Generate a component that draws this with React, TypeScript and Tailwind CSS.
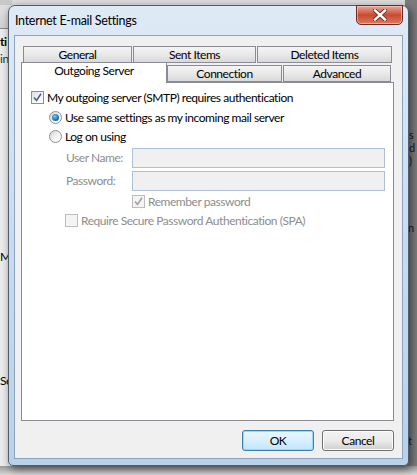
const font = { fontFamily: "Lato, 'Liberation Sans', sans-serif" };

function Check({ checked, disabled }: { checked?: boolean; disabled?: boolean }) {
  return (
    <div
      className={
        "w-[13px] h-[13px] shrink-0 border flex items-center justify-center " +
        (disabled
          ? "border-[#bcbcbc] bg-[#f4f4f4]"
          : "border-[#8e8f8f] bg-gradient-to-br from-[#dcdcdc] via-[#f4f4f4] to-white")
      }
    >
      {checked && (
        <svg width="9" height="9" viewBox="0 0 9 9">
          <path
            d="M1 4.5 L3.5 7.5 L8 0.8"
            fill="none"
            stroke={disabled ? "#a2a2a2" : "#4a5f97"}
            strokeWidth="1.6"
          />
        </svg>
      )}
    </div>
  );
}

function Radio({ checked }: { checked?: boolean }) {
  return (
    <div className="w-[13px] h-[13px] shrink-0 rounded-full border border-[#8e8f8f] bg-gradient-to-br from-[#d4d4d4] via-[#f2f2f2] to-white flex items-center justify-center">
      {checked && (
        <div className="w-[7px] h-[7px] rounded-full bg-[radial-gradient(circle_at_40%_35%,#7fc8ef_0%,#2a8ac4_45%,#0d3b5e_100%)]" />
      )}
    </div>
  );
}

function Tab({ label, w, selected }: { label: string; w: string; selected?: boolean }) {
  return (
    <div
      className={
        "flex justify-center border border-[#898c95] " +
        w +
        (selected
          ? " h-[21px] bg-white border-b-0 relative z-10 mb-[-1px] pt-[2px] items-start"
          : " h-[17px] bg-gradient-to-b from-[#f4f4f4] via-[#e9e9e9] to-[#d9d9d9] items-center")
      }
    >
      <span className="leading-none">{label}</span>
    </div>
  );
}

function Button({ label, primary }: { label: string; primary?: boolean }) {
  return (
    <div
      className={
        "w-[72px] h-[21px] rounded-[3px] border flex items-center justify-center " +
        (primary
          ? "border-[#3c7fb1] bg-gradient-to-b from-[#eaf6fd] via-[#d9f0fc] to-[#bee6fd] shadow-[inset_0_0_0_1px_#9cd6f5]"
          : "border-[#707070] bg-gradient-to-b from-[#f2f2f2] via-[#ebebeb] to-[#cfcfcf] shadow-[inset_0_0_0_1px_#fcfcfc]")
      }
    >
      <span className="leading-none">{label}</span>
    </div>
  );
}

export default function App() {
  return (
    <div
      className="relative w-[417px] h-[475px] overflow-hidden bg-[#dcdcdc] text-[12px] tracking-[-0.45px] text-black"
      style={font}
    >
      {/* background window behind (desktop) */}
      <div className="absolute left-0 top-0 w-[12px] h-full bg-[#ececec] overflow-hidden">
        <div className="h-[5px] bg-[#c9c9c9]" />
        <div className="h-[24px] bg-gradient-to-b from-[#e0e0e0] to-[#d2d2d2] border-b border-[#8a8a8a]" />
        <div className="pt-[6px] font-bold leading-[14px] text-[12px]">ti</div>
        <div className="pt-[3px] leading-[14px] text-[#333]">in</div>
        <div className="pt-[184px] leading-[14px]">M</div>
        <div className="pt-[110px] leading-[14px]">Se</div>
      </div>
      <div className="absolute right-0 top-0 w-[12px] h-full bg-[#7c7c7c] overflow-hidden text-[11px] text-[#1a1a1a]">
        <div className="pt-[129px] pl-[4px] leading-[11px]">s</div>
        <div className="mt-[2px] pl-[4px] leading-[11px]">d</div>
        <div className="mt-[2px] pl-[4px] leading-[11px]">)</div>
        <div className="mt-[56px] pl-[3px] leading-[11px]">n</div>
        <div className="mt-[202px] pl-[3px] leading-[11px]">t</div>
      </div>
      <div className="absolute left-0 right-0 bottom-0 h-[9px] bg-gradient-to-b from-[#9a9a9a] to-[#d8d8d8]" />

      {/* Dialog window */}
      <div className="absolute left-[8px] top-[5px] w-[401px] h-[461px] rounded-t-[7px] rounded-b-[5px] border border-[#4f5e6e] bg-gradient-to-b from-[#dfeaf6] via-[#c8dcf1] to-[#b9d1ea] shadow-[2px_3px_8px_rgba(0,0,0,0.55)] flex flex-col">
        {/* title bar */}
        <div className="relative h-[29px] flex items-center pl-[6px] shrink-0">
          <span className="text-[12.5px] tracking-[-0.3px] text-black pt-[1px]">Internet E-mail Settings</span>
          <div className="absolute right-[5px] top-[-1px] w-[47px] h-[20px] rounded-b-[5px] border border-[#6e2a23] bg-gradient-to-b from-[#e9a99b] via-[#c9482f] to-[#da7a60] shadow-[inset_0_0_0_1px_rgba(255,210,200,0.55)] flex items-center justify-center">
            <svg width="14" height="12" viewBox="0 0 14 12">
              <path
                d="M2 1.5 L12 10.5 M12 1.5 L2 10.5"
                stroke="#6b2a20"
                strokeWidth="4.2"
                strokeLinecap="square"
              />
              <path
                d="M2 1.5 L12 10.5 M12 1.5 L2 10.5"
                stroke="#ffffff"
                strokeWidth="2.4"
                strokeLinecap="square"
              />
            </svg>
          </div>
        </div>

        {/* client area */}
        <div className="mx-[5px] mb-[6px] flex-1 border border-[#8ea3bc] bg-[#f0f0f0] flex flex-col pl-[6px] pr-[8px]">
          {/* tabs */}
          <div className="flex flex-col mt-[10px]">
            <div className="flex pl-[2px] gap-[1px]">
              <Tab label="General" w="w-[109px]" />
              <Tab label="Sent Items" w="w-[123px]" />
              <Tab label="Deleted Items" w="w-[135px]" />
            </div>
            <div className="flex items-end mt-[-2px] h-[21px]">
              <Tab label="Outgoing Server" w="w-[146px]" selected />
              <Tab label="Connection" w="w-[115px]" />
              <div className="w-[1px]" />
              <Tab label="Advanced" w="w-[108px]" />
            </div>
          </div>

          {/* panel */}
          <div className="h-[339px] bg-white border border-[#898c95] flex flex-col pl-[9px] pt-[8px]">
            <div className="flex items-center gap-[3px] h-[13px]">
              <Check checked />
              <span>My outgoing server (SMTP) requires authentication</span>
            </div>
            <div className="flex flex-col pl-[18px] mt-[7px]">
              <div className="flex items-center gap-[3px] h-[13px]">
                <Radio checked />
                <span>Use same settings as my incoming mail server</span>
              </div>
              <div className="flex items-center gap-[3px] h-[13px] mt-[6px]">
                <Radio />
                <span>Log on using</span>
              </div>
              <div className="flex flex-col pl-[17px] mt-[5px] text-[#8d8d8d]">
                <div className="flex items-center h-[20px]">
                  <span className="w-[66px]">User Name:</span>
                  <div className="w-[253px] h-[20px] border border-[#afc0d5] bg-[#f0f0f0]" />
                </div>
                <div className="flex items-center h-[20px] mt-[3px]">
                  <span className="w-[66px]">Password:</span>
                  <div className="w-[253px] h-[20px] border border-[#afc0d5] bg-[#f0f0f0]" />
                </div>
                <div className="flex items-center gap-[3px] h-[13px] mt-[4px] pl-[66px]">
                  <Check checked disabled />
                  <span>Remember password</span>
                </div>
                <div className="flex items-center gap-[3px] h-[13px] mt-[6px] ml-[-1px]">
                  <Check disabled />
                  <span>Require Secure Password Authentication (SPA)</span>
                </div>
              </div>
            </div>
          </div>

          {/* buttons */}
          <div className="flex justify-end gap-[8px] mt-[9px]">
            <Button label="OK" primary />
            <Button label="Cancel" />
          </div>
        </div>
      </div>
    </div>
  );
}
